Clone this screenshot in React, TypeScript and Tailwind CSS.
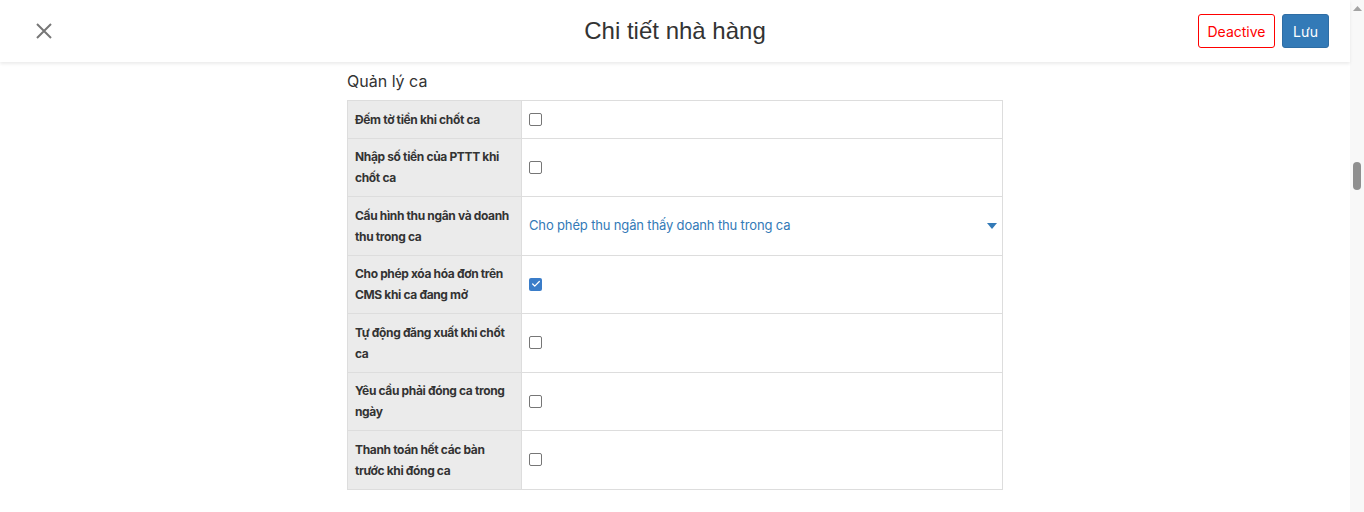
import { Check } from "lucide-react";

// Cài đặt ca: cột trái là nhãn, cột phải là checkbox hoặc select
type Dong =
  | { nhan: string; loai: "check"; bat: boolean }
  | { nhan: string; loai: "select"; giaTri: string };

const caiDat: Dong[] = [
  { nhan: "Đếm tờ tiền khi chốt ca", loai: "check", bat: false },
  { nhan: "Nhập số tiền của PTTT khi chốt ca", loai: "check", bat: false },
  { nhan: "Cấu hình thu ngân và doanh thu trong ca", loai: "select", giaTri: "Cho phép thu ngân thấy doanh thu trong ca" },
  { nhan: "Cho phép xóa hóa đơn trên CMS khi ca đang mở", loai: "check", bat: true },
  { nhan: "Tự động đăng xuất khi chốt ca", loai: "check", bat: false },
  { nhan: "Yêu cầu phải đóng ca trong ngày", loai: "check", bat: false },
  { nhan: "Thanh toán hết các bàn trước khi đóng ca", loai: "check", bat: false },
];

function OCheck({ bat }: { bat: boolean }) {
  if (bat) {
    return (
      <span className="flex h-[13px] w-[13px] items-center justify-center rounded-[2px] bg-[#3a7dc9]">
        <Check className="h-[10px] w-[10px] text-white" strokeWidth={3} />
      </span>
    );
  }
  return <span className="block h-[13px] w-[13px] rounded-[2px] border border-[#767676] bg-white" />;
}

export default function App() {
  return (
    <div className="flex h-[512px] w-full overflow-hidden bg-white font-['Inter','Liberation_Sans',sans-serif] text-[#333]">
      <div className="flex min-w-0 flex-1 flex-col">
        <header className="relative z-10 grid h-[62px] shrink-0 grid-cols-[1fr_auto_1fr] items-center bg-white px-[21px] shadow-[0_2px_3px_rgba(0,0,0,0.08)]">
          <button type="button" className="ml-[15px] justify-self-start">
            <svg width="16" height="16" viewBox="0 0 16 16">
              <path d="M1 1L15 15M15 1L1 15" stroke="#777" strokeWidth="2" />
            </svg>
          </button>
          <h1 className="text-center font-['Liberation_Sans',Arial,sans-serif] text-[24px] leading-none text-[#333]">
            Chi tiết nhà hàng
          </h1>
          <div className="flex gap-[7px] justify-self-end">
            <button
              type="button"
              className="h-[34px] w-[77px] rounded-[3px] border border-[#ff0000] bg-white text-[14px] text-[#ff0000]"
            >
              Deactive
            </button>
            <button
              type="button"
              className="h-[34px] w-[47px] rounded-[3px] border border-[#2e6da4] bg-[#337ab7] text-[14px] text-white"
            >
              Lưu
            </button>
          </div>
        </header>

        <main className="mx-auto w-[656px] pt-[9px]">
          <h2 className="mb-[8px] text-[16px] leading-[21px] text-[#333]">Quản lý ca</h2>
          <table className="w-full border-collapse border border-[#ddd] text-[12px] leading-[21px]">
            <tbody>
              {caiDat.map((d) => (
                <tr key={d.nhan}>
                  <th className="w-[174px] border border-[#ddd] bg-[#ebebeb] px-[7px] py-[7.75px] text-left align-middle font-bold tracking-[-0.35px] text-[#333]">
                    {d.nhan}
                  </th>
                  <td className="border border-[#ddd] px-[7px] py-[7.75px] align-middle">
                    {d.loai === "check" ? (
                      <OCheck bat={d.bat} />
                    ) : (
                      <div className="flex items-center justify-between text-[13px] tracking-[-0.15px] text-[#337ab7]">
                        <span>{d.giaTri}</span>
                        <svg width="10" height="6" viewBox="0 0 10 6" className="-mr-[2px]">
                          <path d="M0 0h10L5 6z" fill="#337ab7" />
                        </svg>
                      </div>
                    )}
                  </td>
                </tr>
              ))}
            </tbody>
          </table>
        </main>
      </div>

      {/* thanh cuộn bên phải */}
      <div className="flex w-[14px] shrink-0 flex-col items-center bg-[#f8f8f8]">
        <svg width="9" height="5" viewBox="0 0 9 5" className="mt-[6px]">
          <path d="M0 5L4.5 0L9 5z" fill="#a3a3a3" />
        </svg>
        <div className="mt-[151px] h-[28px] w-[8px] rounded-full bg-[#8f8f8f]" />
      </div>
    </div>
  );
}
